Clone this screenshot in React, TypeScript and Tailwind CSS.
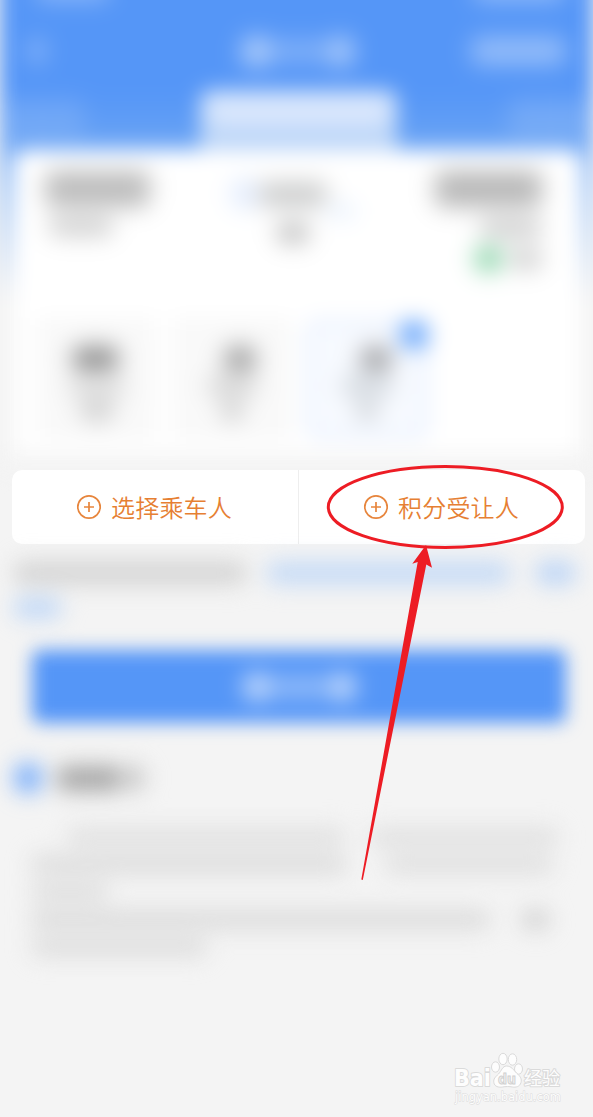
import clsx from "clsx"

const Smudge = ({ className }: { className: string }) => (
  <div className={clsx("shrink-0 rounded-lg blur-[7px]", className)} />
)

const PlusCircle = () => (
  <svg className="h-[26px] w-[26px] shrink-0" viewBox="0 0 26 26" fill="none" stroke="#e7853c">
    <circle cx="13" cy="13" r="11.2" strokeWidth="1.7" />
    <path d="M8 13h10M13 8v10" strokeWidth="1.7" />
  </svg>
)

const AddButton = ({ label }: { label: string }) => (
  <button className="flex flex-1 items-center justify-center gap-[9px] pr-[2px] text-[24px] leading-none font-[350] tracking-[0.2px] text-[#e67f33]">
    <PlusCircle />
    <span className="pb-[1px]">{label}</span>
  </button>
)

const Header = () => (
  <>
    <div className="flex h-[24px] items-end justify-between pr-[28px] pl-[35px]">
      <Smudge className="h-[20px] w-[75px] bg-white/35" />
      <Smudge className="h-[20px] w-[92px] bg-white/40" />
    </div>
    <div className="mt-[24px] flex h-[54px] items-center">
      <Smudge className="ml-[29px] h-[26px] w-[16px] bg-white/35" />
      <div className="ml-[197px] flex items-center">
        <Smudge className="h-[29px] w-[29px] bg-white/55" />
        <Smudge className="h-[24px] w-[56px] bg-white/25" />
        <Smudge className="h-[29px] w-[27px] bg-white/50" />
      </div>
      <Smudge className="ml-[117px] h-[28px] w-[95px] bg-white/38" />
    </div>
    <div className="mt-[13px] flex h-[59px] items-start">
      <Smudge className="mt-[7px] h-[40px] w-[85px] bg-white/12" />
      <div className="ml-[115px] h-[59px] w-[197px] rounded-t-lg bg-[#bbd5f8]">
        <Smudge className="mx-auto mt-[3px] h-[32px] w-[186px] bg-[#dbe8fd]" />
      </div>
      <Smudge className="mt-[7px] ml-[111px] h-[40px] w-[85px] bg-white/14" />
    </div>
  </>
)

const Trip = () => (
  <div className="flex h-[148px] justify-between pt-[21px] pr-[39px] pl-[31px]">
    <div className="w-[105px]">
      <Smudge className="h-[36px] w-[105px] bg-[#bcbcbc]" />
      <Smudge className="mt-[9px] ml-[4px] h-[20px] w-[64px] bg-[#cfcfcf]" />
    </div>
    <div className="flex w-[130px] flex-col items-center pt-[1px]">
      <div className="flex items-center">
        <Smudge className="h-[28px] w-[28px] bg-[#e2ecfe]" />
        <Smudge className="h-[25px] w-[68px] bg-[#cbcccc]" />
        <Smudge className="mt-[34px] h-[10px] w-[28px] bg-[#dceafc]" />
      </div>
      <Smudge className="mt-[7px] h-[20px] w-[32px] bg-[#bcbcbc]" />
    </div>
    <div className="flex w-[107px] flex-col items-end">
      <Smudge className="h-[36px] w-[107px] bg-[#b8b8b8]" />
      <Smudge className="mt-[10px] h-[21px] w-[62px] bg-[#d0d0d0]" />
      <div className="mt-[9px] flex items-center gap-[8px]">
        <Smudge className="h-[24px] w-[27px] rounded-full bg-[#86d3a6]" />
        <Smudge className="h-[20px] w-[32px] bg-[#cdcdcd]" />
      </div>
    </div>
  </div>
)

const Seats = () => (
  <div className="mt-[20px] flex h-[122px] gap-[17px] pl-[24px]">
    <div className="flex w-[118px] flex-col items-center bg-[#f9f9f9] pt-[29px]">
      <Smudge className="-ml-[4px] h-[24px] w-[45px] bg-[#8a8a8a]" />
      <Smudge className="mt-[7px] h-[18px] w-[56px] bg-[#d8d8d8]" />
      <Smudge className="mt-[4px] h-[20px] w-[32px] bg-[#cbcbcb]" />
    </div>
    <div className="flex w-[118px] flex-col items-center bg-[#f9f9f9] pt-[29px]">
      <Smudge className="ml-[16px] h-[25px] w-[30px] bg-[#9a9a9a]" />
      <Smudge className="mt-[5px] h-[18px] w-[48px] bg-[#d1d1d1]" />
      <Smudge className="mt-[5px] h-[20px] w-[18px] bg-[#c2c2c2]" />
    </div>
    <div className="-ml-[4px] flex w-[126px] flex-col items-center rounded-2xl border-[8px] border-[#ebf2fe] bg-[#f7faff] pt-[21px]">
      <div className="relative -mr-[18px]">
        <Smudge className="h-[25px] w-[30px] bg-[#9c9da0]" />
        <div className="absolute -top-[26px] left-[39px] h-[28px] w-[28px] rounded-lg bg-[#74adfb] blur-[4px]" />
      </div>
      <Smudge className="mt-[5px] h-[18px] w-[50px] bg-[#cfd5db]" />
      <Smudge className="mt-[5px] h-[20px] w-[18px] bg-[#c4c9ce]" />
    </div>
  </div>
)

const Notice = () => (
  <>
    <div className="flex h-[28px] items-center pl-[15px]">
      <Smudge className="h-[28px] w-[26px] rounded-full bg-[#74abfb]" />
      <Smudge className="ml-[16px] h-[25px] w-[65px] bg-[#a5a5a5]" />
      <Smudge className="h-[24px] w-[22px] bg-[#c4c4c4]" />
    </div>
    <div className="mt-[36px] flex flex-col gap-[9px] pl-[31px]">
      <div className="flex gap-[24px]">
        <Smudge className="ml-[36px] h-[18px] w-[278px] bg-[#dfdfdf]" />
        <Smudge className="h-[18px] w-[190px] bg-[#dfdfdf]" />
      </div>
      <div className="flex gap-[38px]">
        <Smudge className="h-[19px] w-[316px] bg-[#dcdcdc]" />
        <Smudge className="h-[19px] w-[168px] bg-[#dfdfdf]" />
      </div>
      <Smudge className="h-[18px] w-[77px] bg-[#dddddd]" />
      <div className="flex gap-[32px]">
        <Smudge className="h-[19px] w-[459px] bg-[#dbdbdb]" />
        <Smudge className="h-[19px] w-[27px] bg-[#cfcfcf]" />
      </div>
      <Smudge className="h-[18px] w-[176px] bg-[#dcdcdc]" />
    </div>
  </>
)

const Watermark = () => (
  <svg
    className="absolute top-[1048px] left-[450px] h-[60px] w-[120px]"
    viewBox="0 0 120 60"
    fill="#fdfdfd"
    stroke="#dadada"
    strokeWidth="1"
  >
    <g style={{ paintOrder: "stroke" }} strokeWidth="2" strokeLinejoin="round">
      <text x="4" y="38" fontFamily="DejaVu Sans" fontWeight="bold" fontSize="23.500" textLength="37" lengthAdjust="spacingAndGlyphs">Bai</text>
      <text x="74" y="37" fontFamily="Noto Sans CJK SC" fontSize="18" textLength="36">经验</text>
    </g>
    <ellipse cx="45.5" cy="19" rx="4" ry="5.2" />
    <ellipse cx="53" cy="11" rx="4.2" ry="5.7" />
    <ellipse cx="62.5" cy="11.5" rx="4.2" ry="5.7" />
    <ellipse cx="68.500" cy="21" rx="4" ry="5.2" />
    <path d="M56.500 18c5 0 7 4 10 7 4 3.500 5.500 6 4.500 9.500-1.200 4.500-5.500 5-8.500 4.500-3.500-.6-6.500-.6-10 0-3.800.6-8-.3-8.700-4.500-.6-3.500 1.500-5.500 4.700-8.500 2.900-3 4-8 8-8Z" />
    <text x="48" y="36" fill="#f0f0f0" stroke="#d0d0d0" fontFamily="DejaVu Sans" fontWeight="bold" fontSize="14.500" textLength="18" lengthAdjust="spacingAndGlyphs">du</text>
    <text x="5" y="53" strokeWidth="1" style={{ paintOrder: "stroke" }} fontFamily="DejaVu Sans" fontSize="12" textLength="106" lengthAdjust="spacingAndGlyphs">jingyan.baidu.com</text>
  </svg>
)

const App = () => {
  return (
    <div className="relative h-[1117px] w-[593px] overflow-hidden bg-[#f4f4f4] font-['Noto_Sans_CJK_SC',sans-serif]">
      <div className="-mt-[24px] h-[494px] bg-[linear-gradient(#5596f7_115px,#619ef5_152px,#a0c5f6_215px,#f4f4f4_325px)] blur-[10px]">
        <Header />
        <div className="mr-[12px] ml-[14px] h-[304px] rounded-xl bg-white">
          <Trip />
          <Seats />
        </div>
      </div>

      <div className="relative mr-[8px] ml-[12px] flex h-[74px] rounded-[10px] bg-white">
        <AddButton label="选择乘车人" />
        <div className="w-px bg-[#eeeeee]" />
        <AddButton label="积分受让人" />
      </div>

      <div className="pt-[18px] blur-[9px]">
        <div className="flex pl-[14px]">
          <Smudge className="h-[22px] w-[232px] bg-[#d2d2d2]" />
          <Smudge className="ml-[21px] h-[22px] w-[243px] bg-[#c3d9f6]" />
          <Smudge className="ml-[26px] h-[22px] w-[39px] bg-[#b9d3f6]" />
        </div>
        <Smudge className="mt-[14px] ml-[14px] h-[20px] w-[47px] bg-[#bdd6f7]" />
        <div className="mt-[32px] mr-[27px] ml-[32px] flex h-[73px] items-center justify-center rounded-lg bg-[#5596f7]">
          <Smudge className="h-[28px] w-[29px] bg-white/60" />
          <Smudge className="h-[24px] w-[56px] bg-white/33" />
          <Smudge className="h-[28px] w-[28px] bg-white/60" />
        </div>
        <div className="mt-[41px]">
          <Notice />
        </div>
      </div>

      <svg className="absolute top-0 left-0 h-[1117px] w-[593px]" viewBox="0 0 593 1117" fill="none">
        <ellipse cx="445.300" cy="507" rx="117" ry="40.500" stroke="#ed1c24" strokeWidth="3" />
        <path d="M426 545L432 567.700L426.300 564.500L362.800 880L361.300 879.500L417.700 562L412.300 563.700Z" fill="#ed1c24" />
      </svg>
      <Watermark />
    </div>
  )
}

export default App
